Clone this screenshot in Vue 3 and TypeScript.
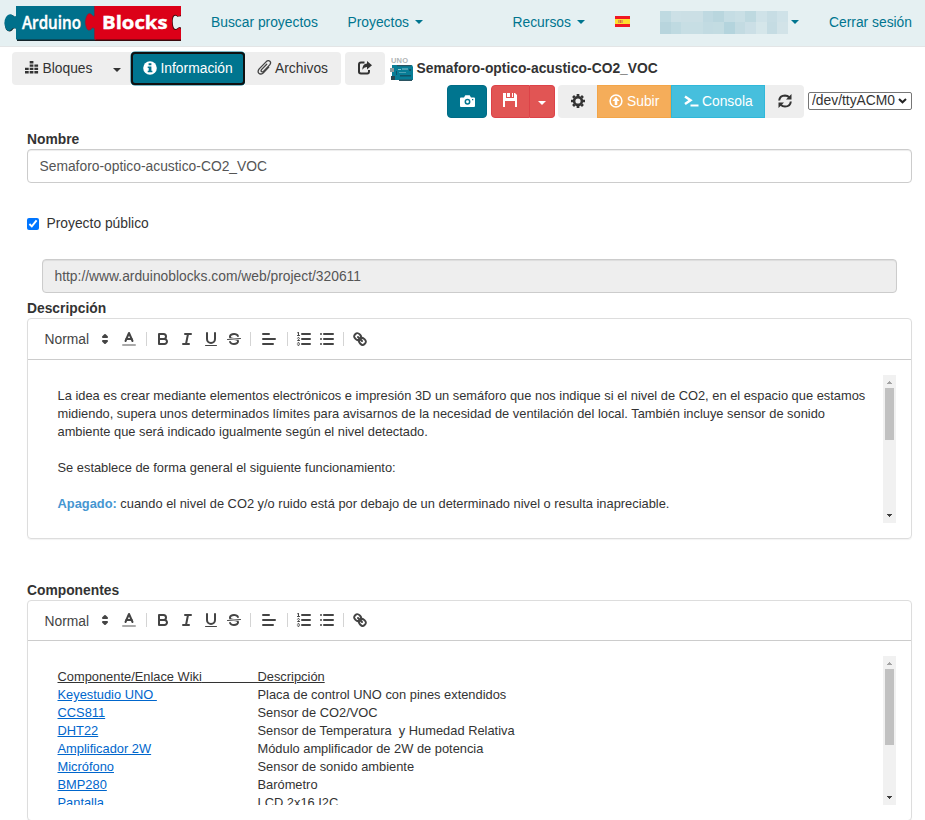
<script setup lang="ts">
import { ref } from 'vue'

interface Part { name: string; text: string }

const projectName = ref('Semaforo-optico-acustico-CO2_VOC')
const isPublic = ref(true)
const projectUrl = 'http://www.arduinoblocks.com/web/project/320611'
const port = ref('/dev/ttyACM0')

const parts: Part[] = [
  { name: 'Keyestudio UNO\u00a0', text: 'Placa de control UNO con pines extendidos' },
  { name: 'CCS811', text: 'Sensor de CO2/VOC' },
  { name: 'DHT22', text: 'Sensor de Temperatura \u00a0y Humedad Relativa' },
  { name: 'Amplificador 2W', text: 'Módulo amplificador de 2W de potencia' },
  { name: 'Micrófono', text: 'Sensor de sonido ambiente' },
  { name: 'BMP280', text: 'Barómetro' },
  { name: 'Pantalla', text: 'LCD 2x16 I2C' },
]

const editors = [
  { id: 'desc', title: 'Descripción' },
  { id: 'comp', title: 'Componentes' },
]

const maskCells = [
  '#bfdae1', '#cce0e6', '#cbdfe5', '#cbdfe5', '#bfd9e1', '#b9d6de', '#c5dde4', '#c9dfe5', '#bed9e0', '#cfe2e8', '#c7dde4', '#cfe2e8',
  '#b8d5dd', '#bfdae1', '#c7dee4', '#c7dee4', '#c2dbe2', '#c3dce2', '#b4d4dd', '#c3dbe2', '#cbdfe6', '#d5e6ea', '#c5dce3', '#d2e3e8',
]
</script>

<template>
  <div class="page">
    <nav class="navbar">
      <svg class="logo" width="182" height="46" viewBox="0 0 182 46" role="img">
        <path d="M17 8H96V41H17V29Q14 27 12 30.5Q9 33 6 29.500Q3 23 7 17Q10 13 14 16Q15 18 17 17Z" fill="#14252b" />
        <path d="M95 7H181V16.500H178V27H181V41H95Z" fill="#3b0a0d" />
        <path d="M16 6H96V39.500H16V28.500Q13 27 11 30Q8 32.500 6 29Q3 22 6 17Q9 12.500 13 15.500Q14 17 16 16Z" fill="#00708b" />
        <path d="M94.500 6H181V15Q178 17.500 176.500 15Q172 13.500 172 21Q172 32 177 29.500Q180 26 181 29.500V39.500H94.500V28.500Q92 26.500 91 29.500Q88 31.500 86.500 28Q84 22 86.500 16.500Q88.500 12 91.500 14.500Q93 17 94.500 16Z" fill="#dc0018" />
        <path d="M182 16Q178 18 176.500 16Q173 15 172.700 21Q173 31 177 28.500Q180 25.500 182 28.500Z" fill="#e5f0f2" />
        <path d="M94.500 6V16Q93 17 91.500 14.500Q88.500 12 86.500 16.500Q84 22 86.500 28Q88 31.500 91 29.500Q92 26.500 94.500 28.500V39" fill="none" stroke="#8c1e32" stroke-width=".7" />
        <text class="logo-text" x="22" y="28.500" textLength="59" lengthAdjust="spacingAndGlyphs">Arduino</text>
        <text class="logo-text bold" x="102" y="29" textLength="65.500" lengthAdjust="spacingAndGlyphs">Blocks</text>
      </svg>
      <a class="nav-link search">Buscar proyectos</a>
      <a class="nav-link projects">Proyectos <i class="caret" /></a>
      <a class="nav-link resources">Recursos <i class="caret" /></a>
      <svg class="flag" width="15" height="11" viewBox="0 0 15 11">
        <rect width="15" height="11" fill="#f01822" />
        <rect y="3" width="15" height="5" fill="#ffe02e" />
        <rect x="3" y="4" width="1" height="3" fill="#d89058" />
        <rect x="4.500" y="4" width="2" height="3" fill="#dd6b3a" />
        <rect x="7" y="4" width="1" height="3" fill="#d8a058" />
      </svg>
      <span class="user"><i v-for="(c, i) in maskCells" :key="i" :style="{ background: c }" /></span>
      <i class="caret user-caret" />
      <a class="nav-link logout">Cerrar sesión</a>
    </nav>

    <div class="tabs">
      <button class="btn blocks">
        <svg width="14" height="13" viewBox="0 0 14 13" fill="#333">
          <path d="M0 10h3.700v2.500H0zM0 6.700h3.700v2.400H0zM4.700 10h3.700v2.500H4.700zM4.700 6.700h3.700v2.400H4.700zM4.700 3.400h3.700v2.400H4.700zM4.700 .1h3.700v2.400H4.700zM9.400 10h3.700v2.500H9.400zM9.400 6.700h3.700v2.400H9.400zM9.400 3.400h3.700v2.400H9.400z" />
        </svg>
        <span>Bloques</span><i class="caret" />
      </button>
      <button class="btn info">
        <svg width="14" height="14" viewBox="0 0 14 14"><circle cx="7" cy="7" r="6.800" fill="#fff" /><path d="M5.600 2.300h2.800v2H5.600zM4.700 5.500h3.700v4.300h1v1.500H4.700V9.800h1V7h-1z" fill="#00758f" /></svg>
        <span>Información</span>
      </button>
      <button class="btn files">
        <svg width="15" height="16" viewBox="0 0 15 16" fill="none" stroke="#444" stroke-width="1.300" stroke-linecap="round"><path d="M9.700 4.200 4.500 9.600q-1 1.500.2 2.100 1 .5 2-.6l6-6.200q1.700-2.200.2-3.600-1.700-1.400-3.600.3L2.200 8.900q-2 2.600-.3 4.400 1.800 1.600 4.300-.4l5.600-5.800" /></svg>
        <span>Archivos</span>
      </button>
      <button class="btn share">
        <svg width="14" height="14" viewBox="0 0 14 14"><path d="M6.500 1.500H3Q1 1.500 1 3.500v7.300q0 1.700 2 1.700h6.300q1.700 0 1.700-2V9" fill="none" stroke="#333" stroke-width="2" /><path d="M9 0 14 4.300 9 8.600V6.100Q6 6 4.300 8.800 4.300 3 9 2.500Z" fill="#333" /></svg>
      </button>
      <svg class="board" width="24" height="25" viewBox="0 0 24 25">
        <text x="1" y="6" font-size="7.500" font-weight="bold" font-family="Liberation Sans, sans-serif" fill="#b0b4b5" textLength="17">UNO</text>
        <path d="M2 8H22L23 10V23H2Z" fill="#087d96" /><path d="M0 11h4v4H0z" fill="#929b9d" /><path d="M1 19h4v4H1z" fill="#29464f" />
        <path d="M7 8h14v1.200H7zM9 22.500h13V24H9z" fill="#2b5361" /><path d="M10 18h11v1.500H10z" fill="#0f5367" />
        <path d="M8 12h3v1H8zM12 11.500h6v1h-6zM9 15h7v.6H9z" fill="#8fc4cf" /><path d="M6 14h1v4H6zM19 12h2v2h-2z" fill="#10536a" />
      </svg>
      <strong class="project-title">Semaforo-optico-acustico-CO2_VOC</strong>
    </div>

    <div class="actions">
      <button class="btn camera">
        <svg width="15" height="12" viewBox="0 0 15 12"><path d="M1 2.500h3L5.300.3h4.400L11 2.500h3q1 0 1 1V11q0 1-1 1H1q-1 0-1-1V3.500q0-1 1-1Z" fill="#fff" /><circle cx="7.500" cy="6.800" r="2.200" fill="none" stroke="#00758f" stroke-width="1.500" /><path d="M12 4h1.300v1.300H12z" fill="#00758f" /></svg>
      </button>
      <button class="btn save">
        <svg width="14" height="14" viewBox="0 0 14 14"><path d="M0 0h3v5h8V0h1l2 2v12h-2V8H2v6H0zM4 0h3v4H4zM9 0h1v4H9z" fill="#fff" /></svg>
      </button>
      <button class="btn save-more"><i class="caret" /></button>
      <button class="btn gear">
        <svg width="14" height="14" viewBox="0 0 14 14"><g fill="none" stroke="#333"><circle cx="7" cy="7" r="3.900" stroke-width="2.600" /><path d="M7 0v2M7 12v2M0 7h2M12 7h2M2.050 2.050l1.450 1.450M10.500 10.500l1.450 1.450M2.050 11.950l1.450-1.450M10.500 3.500l1.450-1.450" stroke-width="2.700" /></g></svg>
      </button>
      <button class="btn upload">
        <svg width="14" height="14" viewBox="0 0 14 14"><circle cx="7" cy="7" r="5.900" fill="none" stroke="#fff" stroke-width="1.500" /><path d="M7 2.800 10.600 7H8.300v3.900H5.700V7H3.400z" fill="#fff" /></svg>
        <span>Subir</span>
      </button>
      <button class="btn console">
        <svg width="15" height="12" viewBox="0 0 15 12"><path d="M1 1.500 6.500 5.200 1 9" fill="none" stroke="#fff" stroke-width="2.500" /><path d="M6.500 9.500H14.500v2h-8z" fill="#fff" /></svg>
        <span>Consola</span>
      </button>
      <button class="btn refresh">
        <svg width="14" height="14" viewBox="0 0 14 14"><g fill="none" stroke="#333" stroke-width="2"><path d="M1.200 6.500Q1.600 1.500 7 1.400 9.500 1.500 11.300 3.300M12.800 7.500Q12.400 12.500 7 12.600 4.500 12.500 2.700 10.700" /></g><path d="M13.500 0v5.500H8zM.5 14V8.500H6z" fill="#333" /></svg>
      </button>
      <label class="port">
        <select v-model="port"><option>/dev/ttyACM0</option></select>
        <svg width="9" height="6" viewBox="0 0 9 6"><path d="M1 1 4.500 4.300 8 1" fill="none" stroke="#222" stroke-width="2" /></svg>
      </label>
    </div>

    <main class="form">
      <label class="label">Nombre</label>
      <input v-model="projectName" class="field" type="text">
      <label class="check"><input v-model="isPublic" type="checkbox"><span>Proyecto público</span></label>
      <input class="field url" type="text" :value="projectUrl" readonly>

      <section v-for="ed in editors" :key="ed.id" class="editor" :class="ed.id">
        <label class="label">{{ ed.title }}</label>
        <div class="panel">
          <div class="toolbar">
            <span class="picker">Normal</span>
            <svg class="q arrows" viewBox="0 0 18 18"><polygon class="f" points="7 11 9 13 11 11" /><polygon class="f" points="7 7 9 5 11 7" /></svg>
            <svg class="q color" viewBox="0 0 18 18"><line class="dim" x1="3" x2="15" y1="15" y2="15" /><polyline points="5.500 11 9 3 12.500 11" /><line x1="11.630" x2="6.380" y1="9" y2="9" /></svg>
            <i class="sep a" />
            <svg class="q" viewBox="0 0 18 18"><path d="M5,4H9.500A2.500,2.500,0,0,1,12,6.500v0A2.500,2.500,0,0,1,9.500,9H5V4Z" /><path d="M5,9h5.500A2.500,2.500,0,0,1,13,11.500v0A2.500,2.500,0,0,1,10.500,14H5V9Z" /></svg>
            <svg class="q g6" viewBox="0 0 18 18"><line x1="7" x2="13" y1="4" y2="4" /><line x1="5" x2="11" y1="14" y2="14" /><line x1="8" x2="10" y1="14" y2="4" /></svg>
            <svg class="q g6" viewBox="0 0 18 18"><path d="M5,3V9a4.012,4.012,0,0,0,4,4H9a4.012,4.012,0,0,0,4-4V3" /><rect class="solid" height="1" rx=".5" width="12" x="3" y="15" /></svg>
            <svg class="q g5" viewBox="0 0 18 18"><line class="thin" x1="15.500" x2="2.500" y1="8.500" y2="9.500" /><path class="solid" d="M9.007,8C6.542,7.791,6,7.519,6,6.500,6,5.792,7.283,5,9,5c1.571,0,2.765.679,2.969,1.309a1,1,0,0,0,1.900-.617C13.356,4.106,11.354,3,9,3,6.200,3,4,4.538,4,6.500a3.200,3.200,0,0,0,.5,1.843Z" /><path class="solid" d="M8.984,10C11.457,10.208,12,10.479,12,11.500c0,.708-1.283,1.500-3,1.500-1.571,0-2.765-.679-2.969-1.309a1,1,0,1,0-1.900.617C4.644,13.894,6.646,15,9,15c2.800,0,5-1.538,5-3.500a3.200,3.200,0,0,0-.5-1.843Z" /></svg>
            <i class="sep b" />
            <svg class="q" viewBox="0 0 18 18"><path d="M3 9H15M3 14H13M3 4H9" /></svg>
            <i class="sep c" />
            <svg class="q" viewBox="0 0 18 18"><path d="M7 4H15M7 9H15M7 14H15" /><line class="thin" x1="2.500" x2="4.500" y1="5.500" y2="5.500" /><path class="solid" d="M3.500,6A.5.5,0,0,1,3,5.500V3.085l-.276.138A.5.5,0,0,1,2.053,3c-.124-.247-.023-.324.224-.447l1-.5A.5.5,0,0,1,4,2.500v3A.5.5,0,0,1,3.500,6Z" /><path class="thin" d="M4.500,10.500h-2c0-.234,1.850-1.076,1.850-2.234A.959.959,0,0,0,2.500,8.156" /><path class="thin" d="M2.500,14.846a.959.959,0,0,0,1.850-.109A.7.700,0,0,0,3.750,14a.688.688,0,0,0,.6-.736.959.959,0,0,0-1.850-.109" /></svg>
            <svg class="q g5" viewBox="0 0 18 18"><path d="M6 4H15M6 9H15M6 14H15M3 4H3M3 9H3M3 14H3" /></svg>
            <i class="sep d" />
            <svg class="q" viewBox="0 0 18 18"><line x1="7" x2="11" y1="7" y2="11" /><path d="M8.900,4.577a3.476,3.476,0,0,1,.36,4.679A3.476,3.476,0,0,1,4.577,8.900C3.185,7.500,2.035,6.400,4.217,4.217S7.500,3.185,8.900,4.577Z" /><path d="M13.423,9.100a3.476,3.476,0,0,0-4.679-.36,3.476,3.476,0,0,0,.36,4.679c1.392,1.392,2.500,2.542,4.679.36S14.815,10.500,13.423,9.100Z" /></svg>
          </div>
          <div class="viewport">
            <div v-if="ed.id === 'desc'" class="content">
              <p>La idea es crear mediante elementos electrónicos e impresión 3D un semáforo que nos indique si el nivel de CO2, en el espacio que estamos midiendo, supera unos determinados límites para avisarnos de la necesidad de ventilación del local. También incluye sensor de sonido ambiente que será indicado igualmente según el nivel detectado.</p>
              <p><br></p>
              <p>Se establece de forma general el siguiente funcionamiento:</p>
              <p><br></p>
              <p><strong class="off">Apagado:</strong> cuando el nivel de CO2 y/o ruido está por debajo de un determinado nivel o resulta inapreciable.</p>
            </div>
            <div v-else class="content">
              <p class="part head"><span>Componente/Enlace Wiki</span><span>Descripción</span></p>
              <p v-for="p in parts" :key="p.name" class="part"><span><a>{{ p.name }}</a></span><span>{{ p.text }}</span></p>
            </div>
            <div class="scroll">
              <svg width="5" height="3" viewBox="0 0 5 3" shape-rendering="crispEdges"><path d="M2 0h1v1h1v1h1v1H0V2h1V1h1z" fill="#a3a3a3" /></svg>
              <i class="thumb" />
              <svg width="5" height="3" viewBox="0 0 5 3" shape-rendering="crispEdges"><path d="M0 0h5v1H4v1H3v1H2V2H1V1H0z" fill="#404040" /></svg>
            </div>
          </div>
        </div>
      </section>
    </main>
  </div>
</template>

<style>
body { overflow: hidden; background: #fff; }
</style>

<style scoped>
* { box-sizing: border-box; }
.page { width: 925px; height: 820px; overflow: hidden; font: 13.840px/20px "Liberation Sans", Arial, sans-serif; color: #333; background: #fff; }
svg { display: block; flex: none; }
.navbar { display: flex; align-items: center; height: 47px; padding-bottom: 2px; background: #e5f0f2; border-bottom: 1px solid #e3e5e6; }
.logo { margin-top: 1px; }
.logo-text { font: 600 17.500px "Open Sans", sans-serif; fill: #fff; stroke: #fff; stroke-width: .4px; }
.logo-text.bold { font-weight: 700; font-size: 18.500px; }
.nav-link { display: flex; align-items: center; color: #00758f; white-space: nowrap; }
.caret { flex: none; width: 8px; height: 4px; border: 4px solid transparent; border-top-color: currentColor; border-bottom: 0; }
.nav-link .caret { margin-left: 6px; }
.search { width: 136.500px; margin-left: 29px; }
.projects { width: 165px; }
.resources { width: 102.500px; }
.flag { margin-top: -2px; }
.user { display: grid; grid-template-columns: repeat(12, 1fr); width: 128px; height: 23px; margin-left: 30px; }
.user-caret { margin-left: 3px; color: #00758f; }
.logout { margin-left: 30px; }
.tabs { display: flex; align-items: center; height: 33px; margin: 5px 0 0 12px; }
.btn { display: flex; align-items: center; flex: none; height: 33px; padding: 0; border: 0; color: #333; background: #eee; font: inherit; }
.btn svg { margin-right: 4px; }
.btn span { margin-top: -1px; }
.blocks { width: 119px; padding-left: 12.500px; border-radius: 4px 0 0 4px; }
.blocks svg { margin: -2px 4px 0 0; }
.blocks .caret { margin: 3px 0 0 21px; }
.info { width: 114px; padding-left: 9.500px; border: 2px solid #101010; border-radius: 4px; color: #fff; background: #00758f; box-shadow: 0 0 0 .5px #00758f; }
.info svg { margin-top: -2px; }
.files { width: 96px; padding-left: 12px; border-radius: 0 4px 4px 0; }
.files svg { margin: -2px 3px 0 0; }
.share { width: 40px; margin-left: 4px; padding-left: 13px; border-radius: 4px; }
.share svg { margin-top: -2px; }
.board { margin: 2px 0 0 5px; }
.project-title { margin: -1px 0 0 2.500px; }
.actions { display: flex; align-items: center; height: 33px; padding-left: 447px; }
.camera { width: 40px; justify-content: center; border-radius: 4px; background: #00758f; border: 1px solid #006c86; }
.camera svg, .gear svg, .refresh svg { margin: -2px 0 0; }
.save { width: 39px; margin-left: 4px; padding-left: 11px; border: 1px solid #dd4248; border-radius: 4px 0 0 4px; background: #e15554; }
.save svg { margin: -4px 0 0; }
.save-more { width: 25px; justify-content: center; border: 1px solid #dd4248; border-left: 0; border-radius: 0 4px 4px 0; color: #fff; background: #e15554; }
.save-more .caret { margin-top: 3px; }
.gear { width: 39px; margin-left: 3px; justify-content: center; border-radius: 4px 0 0 4px; }
.upload { width: 74px; padding-left: 11px; border: 1px solid #f3a548; color: #fff; background: #f5ad5a; }
.upload svg { margin-top: -2px; }
.console { width: 94px; padding-left: 12px; border: 1px solid #30b8da; color: #fff; background: #46bfdd; }
.console svg { margin: -1px 3px 0 0; }
.refresh { width: 39px; justify-content: center; border-radius: 0 4px 4px 0; }
.port { display: flex; align-items: center; width: 104px; height: 18px; margin: -2px 0 0 4px; padding-left: 3px; border: 1px solid #767676; border-radius: 2px; background: #fff; }
.port select { appearance: none; width: 86px; height: 16px; margin: -1px 0 0; padding: 0; border: 0; color: #333; background: transparent; font: inherit; line-height: 16px; }
.form { padding: 11px 13px 0 27px; }
.label { display: block; font-weight: bold; }
.field { display: block; width: 100%; height: 34px; padding: 6px 11.500px; border: 1px solid #ccc; border-radius: 4px; outline: 0; color: #555; background: #fff; font: inherit; box-shadow: inset 0 1px 1px rgba(0, 0, 0, .075); }
.check { display: flex; align-items: center; height: 20px; margin-top: 30px; }
.check input { width: 12px; height: 12px; margin: 2px 7.500px 0 0; }
.url { width: auto; min-width: 855px; margin: 26px 15px 5px; background: #eee; }
.comp { margin-top: 41px; }
.panel { height: 221px; border: 1px solid #ddd; border-radius: 4px; box-shadow: 0 1px 1px rgba(0, 0, 0, .05); }
.toolbar { display: flex; align-items: center; height: 41px; padding-left: 16.500px; border-bottom: 1px solid #ccc; }
.comp .toolbar { height: 40px; padding-bottom: 1px; }
.picker { width: 51.500px; color: #444; }
.comp .picker { padding-top: 1px; }
.q { width: 18px; height: 18px; fill: none; stroke: #444; stroke-width: 2; stroke-linecap: round; stroke-linejoin: round; }
.q .f { fill: #444; }
.q .solid { fill: #444; stroke: none; }
.q .thin { stroke-width: 1; }
.q .dim { stroke: #aaa; }
.color { margin-left: 6px; }
.g6 { margin-left: 6px; }
.g5 { margin-left: 5px; }
.sep { width: 1px; height: 14px; background: #d4d4d4; }
.a { margin: 0 7px 0 8px; }
.b { margin: 0 9px 0 7px; }
.c { margin: 0 7px 0 9px; }
.d { margin: 0 7px; }
.viewport { display: flex; justify-content: space-between; height: 148px; margin: 15px 15px 0; overflow: hidden; }
.comp .viewport { height: 149px; }
.content { width: 841px; padding: 12px 14.500px; font-size: 12.865px; line-height: 18px; }
.content p { margin: 0; }
.off { color: #4596d1; }
.part { display: flex; white-space: pre; }
.part span:first-child { width: 200px; }
.part a { color: #06c; text-decoration: underline; }
.head span { text-decoration: underline; }
.head span:first-child { position: relative; }
.head span:first-child::after { content: ""; position: absolute; left: 144px; right: 0; bottom: 3px; height: 1px; background: #333; }
.scroll { display: flex; flex: none; flex-direction: column; align-items: center; width: 13px; padding: 6px 0; background: #f1f1f1; }
.thumb { width: 9px; height: 52px; margin: 4px 0 auto; background: #c1c1c1; }
.comp .thumb { height: 76px; }
</style>
